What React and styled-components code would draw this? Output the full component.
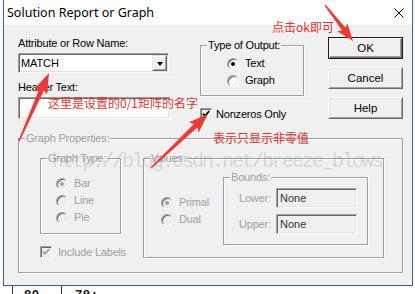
import React from 'react';
import styled, { createGlobalStyle } from 'styled-components';

const Global = createGlobalStyle`
  html, body { margin: 0; padding: 0; background: #fff; }
  body { font-family: "Liberation Sans", Arial, sans-serif; }
`;

const Screen = styled.div`
  position: relative;
  width: 415px;
  height: 294px;
  overflow: hidden;
  background: #fff;
  display: flex;
  flex-direction: column;
`;

const Window = styled.div`
  margin-left: 3px;
  width: 410px;
  height: 286px;
  box-sizing: border-box;
  border: 1px solid #2f63b0;
  border-top: none;
  background: #f0f0f0;
  display: flex;
  flex-direction: column;
  flex-shrink: 0;
`;

const TitleBar = styled.div`
  height: 25px;
  flex-shrink: 0;
  background: #fff;
  display: flex;
  align-items: center;
  justify-content: space-between;
  padding: 0 8px 0 3px;
`;

const TitleText = styled.span`
  font-family: "Noto Sans", "Liberation Sans", sans-serif;
  font-size: 12.5px;
  color: #000;
`;

const Body = styled.div`
  flex: 1;
  display: flex;
  flex-direction: column;
  padding-left: 14px;
`;

const TopSection = styled.div`
  height: 113px;
  display: flex;
  align-items: flex-start;
`;

const LeftCol = styled.div`
  width: 182px;
  padding-top: 12px;
  display: flex;
  flex-direction: column;
  align-items: flex-start;
`;

const MidCol = styled.div`
  width: 104px;
  margin-right: 24px;
  padding-top: 20px;
  display: flex;
  flex-direction: column;
`;

const ButtonCol = styled.div`
  width: 75px;
  padding-top: 12px;
  display: flex;
  flex-direction: column;
  gap: 8px;
`;

const Label = styled.span`
  font-size: 11px;
  line-height: 13px;
  height: 13px;
  letter-spacing: -0.2px;
  white-space: nowrap;
  color: ${p => (p.$disabled ? '#a0a0a0' : '#000')};
  margin-top: ${p => p.$mt || 0}px;
`;

const sunken = `
  box-sizing: border-box;
  border: 1px solid;
  border-color: #a0a0a0 #fff #fff #a0a0a0;
  box-shadow: inset 1px 1px 0 #696969, inset -1px -1px 0 #e3e3e3;
`;

const Combo = styled.div`
  ${sunken}
  margin-top: 3px;
  width: 151px;
  height: 20px;
  background: #fff;
  display: flex;
  align-items: center;
  justify-content: space-between;
  padding: 1px 1px 1px 2px;
`;

const ComboText = styled.span`
  font-size: 11px;
  letter-spacing: -0.1px;
  color: #000;
`;

const DropButton = styled.span`
  box-sizing: border-box;
  width: 15px;
  height: 16px;
  background: #f0f0f0;
  border: 1px solid;
  border-color: #e3e3e3 #696969 #696969 #e3e3e3;
  box-shadow: inset 1px 1px 0 #fff, inset -1px -1px 0 #a0a0a0;
  display: flex;
  align-items: center;
  justify-content: center;
`;

const DropArrow = styled.span`
  width: 0;
  height: 0;
  border-left: 3.5px solid transparent;
  border-right: 3.5px solid transparent;
  border-top: 4px solid #000;
  margin-top: 1px;
`;

const TextField = styled.div`
  ${sunken}
  margin-top: 3px;
  width: 152px;
  height: 22px;
  background: #fff;
`;

const GroupBox = styled.div`
  position: relative;
  box-sizing: border-box;
  border: 1px solid #a0a0a0;
  box-shadow: inset 1px 1px 0 #fff, 1px 1px 0 #fff;
  flex-shrink: 0;
`;

const Legend = styled.span`
  position: absolute;
  top: -7px;
  left: 6px;
  padding: 0 1px;
  background: #f0f0f0;
  font-size: 11px;
  line-height: 13px;
  letter-spacing: -0.2px;
  white-space: nowrap;
  color: ${p => (p.$disabled ? '#a0a0a0' : '#000')};
`;

const OutputGroup = styled(GroupBox)`
  width: 104px;
  height: 51px;
  padding: 11px 0 0 26px;
  display: flex;
  flex-direction: column;
  gap: 4px;
`;

const GraphPropsGroup = styled(GroupBox)`
  width: 385px;
  height: 135px;
  padding: 19px 0 0 21px;
  display: flex;
  align-items: flex-start;
`;

const LeftStack = styled.div`
  width: 81px;
  display: flex;
  flex-direction: column;
`;

const GraphTypeGroup = styled(GroupBox)`
  width: 81px;
  height: 76px;
  padding: 18px 0 0 15px;
  display: flex;
  flex-direction: column;
  gap: 4px;
`;

const ValuesGroup = styled(GroupBox)`
  margin-left: 22px;
  width: 241px;
  height: 100px;
  display: flex;
  align-items: flex-start;
`;

const ValuesOptions = styled.div`
  width: 79px;
  box-sizing: border-box;
  padding: 37px 0 0 17px;
  display: flex;
  flex-direction: column;
  gap: 4px;
`;

const BoundsGroup = styled(GroupBox)`
  margin-top: 18px;
  width: 145px;
  height: 68px;
  padding: 10px 0 0 15px;
  display: flex;
  flex-direction: column;
  gap: 6px;
`;

const BoundRow = styled.div`
  display: flex;
  align-items: center;
  height: 20px;
`;

const BoundLabel = styled(Label)`
  width: 37px;
`;

const BoundInput = styled.div`
  ${sunken}
  width: 81px;
  height: 20px;
  background: #f0f0f0;
  padding-left: 3px;
  font-size: 11px;
  line-height: 18px;
  color: #333;
`;

const Option = styled.div`
  display: flex;
  align-items: center;
  gap: 6px;
  height: 13px;
`;

const CheckRow = styled.div`
  display: flex;
  align-items: center;
  gap: ${p => p.$gap || 5}px;
  height: 12px;
  margin-top: ${p => p.$mt || 12}px;
`;

const Radio = styled.span`
  position: relative;
  box-sizing: border-box;
  width: 12px;
  height: 12px;
  border-radius: 50%;
  border: 1px solid;
  border-color: #a0a0a0 #fff #fff #a0a0a0;
  box-shadow: inset 1px 1px 0 #696969, inset -1px -1px 0 #e3e3e3;
  background: ${p => (p.$disabled ? '#f0f0f0' : '#fff')};
  flex-shrink: 0;
  &::after {
    content: '';
    display: ${p => (p.$checked ? 'block' : 'none')};
    position: absolute;
    left: 3px;
    top: 3px;
    width: 4px;
    height: 4px;
    border-radius: 50%;
    background: ${p => (p.$disabled ? '#a0a0a0' : '#000')};
  }
`;

const CheckBoxFrame = styled.span`
  box-sizing: border-box;
  width: 12px;
  height: 12px;
  border: 1px solid;
  border-color: #a0a0a0 #fff #fff #a0a0a0;
  box-shadow: inset 1px 1px 0 #696969, inset -1px -1px 0 #e3e3e3;
  background: ${p => (p.$disabled ? '#f0f0f0' : '#fff')};
  display: flex;
  align-items: center;
  justify-content: center;
  flex-shrink: 0;
`;

function Checkbox({ disabled }) {
  return (
    <CheckBoxFrame $disabled={disabled}>
      <svg width="8" height="8" viewBox="0 0 8 8">
        <polyline
          points="0.8,3.6 3,5.8 7.2,1.2"
          fill="none"
          stroke={disabled ? '#a0a0a0' : '#000'}
          strokeWidth="1.8"
        />
      </svg>
    </CheckBoxFrame>
  );
}

const Button = styled.button`
  box-sizing: border-box;
  width: 75px;
  height: 22px;
  padding: 0;
  margin: 0;
  background: #f0f0f0;
  font-family: "Liberation Sans", Arial, sans-serif;
  font-size: 11.5px;
  color: #000;
  border: 1px solid;
  border-color: ${p => (p.$default ? '#1a1a1a' : '#fff #696969 #696969 #fff')};
  box-shadow: ${p =>
    p.$default
      ? 'inset 1px 1px 0 #fff, inset -1px -1px 0 #696969, inset -2px -2px 0 #a0a0a0'
      : 'inset 1px 1px 0 #e3e3e3, inset -1px -1px 0 #a0a0a0'};
`;

const BottomStrip = styled.div`
  height: 8px;
  display: flex;
  padding-left: 12px;
  font-family: "Liberation Mono", monospace;
  font-size: 13px;
  font-weight: bold;
  line-height: 13px;
  color: #222;
`;

const StripCell = styled.div`
  border-left: 1px solid #333;
  width: ${p => p.$w}px;
  padding-left: ${p => p.$pl}px;
  padding-top: 3px;
  box-sizing: border-box;
  white-space: nowrap;
`;

const Watermark = styled.div`
  position: absolute;
  left: 52px;
  top: 152px;
  font-family: "Liberation Mono", monospace;
  font-size: 20px;
  line-height: 20px;
  letter-spacing: -2px;
  color: rgba(120, 120, 120, 0.24);
  white-space: nowrap;
  pointer-events: none;
`;

const Note = styled.div`
  position: absolute;
  left: ${p => p.$x}px;
  top: ${p => p.$y}px;
  font-family: "Noto Sans CJK SC", "Liberation Sans", sans-serif;
  font-size: 12px;
  line-height: 14px;
  color: #e5332f;
  white-space: nowrap;
  pointer-events: none;
`;

const ArrowLayer = styled.svg`
  position: absolute;
  left: 0;
  top: 0;
  pointer-events: none;
`;

function arrowPoints([tx, ty], [px, py], headLen, headW, tailW, neckW) {
  const dx = px - tx;
  const dy = py - ty;
  const L = Math.hypot(dx, dy);
  const ux = dx / L;
  const uy = dy / L;
  const nx = -uy;
  const ny = ux;
  const bx = px - ux * headLen;
  const by = py - uy * headLen;
  const bbx = bx - ux * 2.5;
  const bby = by - uy * 2.5;
  const pts = [
    [tx + (nx * tailW) / 2, ty + (ny * tailW) / 2],
    [bx + (nx * neckW) / 2, by + (ny * neckW) / 2],
    [bbx + (nx * headW) / 2, bby + (ny * headW) / 2],
    [px, py],
    [bbx - (nx * headW) / 2, bby - (ny * headW) / 2],
    [bx - (nx * neckW) / 2, by - (ny * neckW) / 2],
    [tx - (nx * tailW) / 2, ty - (ny * tailW) / 2],
  ];
  return pts.map(p => p.map(v => v.toFixed(1)).join(',')).join(' ');
}

const arrows = [
  { tail: [325, 5], tip: [353, 41], head: 15, w: 13, tw: 1.2, nw: 4.5 },
  { tail: [19, 141], tip: [49, 73], head: 18, w: 14, tw: 1.5, nw: 5 },
  { tail: [151, 168], tip: [208, 114], head: 17, w: 14, tw: 1.5, nw: 5 },
];

export default function App() {
  return (
    <>
      <Global />
      <Screen>
        <Window>
          <TitleBar>
            <TitleText>Solution Report or Graph</TitleText>
            <svg width="10" height="10" viewBox="0 0 10 10">
              <path d="M0.5 0.5 L9.5 9.5 M9.5 0.5 L0.5 9.5" stroke="#000" strokeWidth="1" />
            </svg>
          </TitleBar>
          <Body>
            <TopSection>
              <LeftCol>
                <Label>Attribute or Row Name:</Label>
                <Combo>
                  <ComboText>MATCH</ComboText>
                  <DropButton>
                    <DropArrow />
                  </DropButton>
                </Combo>
                <Label $mt={8}>Header Text:</Label>
                <TextField />
              </LeftCol>
              <MidCol>
                <OutputGroup>
                  <Legend>Type of Output:</Legend>
                  <Option>
                    <Radio $checked />
                    <Label>Text</Label>
                  </Option>
                  <Option>
                    <Radio />
                    <Label>Graph</Label>
                  </Option>
                </OutputGroup>
                <CheckRow $gap={4}>
                  <Checkbox />
                  <Label>Nonzeros Only</Label>
                </CheckRow>
              </MidCol>
              <ButtonCol>
                <Button $default>OK</Button>
                <Button>Cancel</Button>
                <Button>Help</Button>
              </ButtonCol>
            </TopSection>
            <GraphPropsGroup>
              <Legend $disabled>Graph Properties:</Legend>
              <LeftStack>
                <GraphTypeGroup>
                  <Legend $disabled>Graph Type:</Legend>
                  <Option>
                    <Radio $checked $disabled />
                    <Label $disabled>Bar</Label>
                  </Option>
                  <Option>
                    <Radio $disabled />
                    <Label $disabled>Line</Label>
                  </Option>
                  <Option>
                    <Radio $disabled />
                    <Label $disabled>Pie</Label>
                  </Option>
                </GraphTypeGroup>
                <CheckRow $gap={6}>
                  <Checkbox disabled />
                  <Label $disabled>Include Labels</Label>
                </CheckRow>
              </LeftStack>
              <ValuesGroup>
                <Legend $disabled>Values:</Legend>
                <ValuesOptions>
                  <Option>
                    <Radio $checked $disabled />
                    <Label $disabled>Primal</Label>
                  </Option>
                  <Option>
                    <Radio $disabled />
                    <Label $disabled>Dual</Label>
                  </Option>
                </ValuesOptions>
                <BoundsGroup>
                  <Legend $disabled>Bounds:</Legend>
                  <BoundRow>
                    <BoundLabel $disabled>Lower:</BoundLabel>
                    <BoundInput>None</BoundInput>
                  </BoundRow>
                  <BoundRow>
                    <BoundLabel $disabled>Upper:</BoundLabel>
                    <BoundInput>None</BoundInput>
                  </BoundRow>
                </BoundsGroup>
              </ValuesGroup>
            </GraphPropsGroup>
          </Body>
        </Window>
        <BottomStrip>
          <StripCell $w={49} $pl={3}>.80</StripCell>
          <StripCell $w={60} $pl={5}>.78:</StripCell>
        </BottomStrip>

        <Watermark>http://blog.csdn.net/breeze_blows</Watermark>
        <Note $x={272} $y={20}>点击ok即可</Note>
        <Note $x={48} $y={96}>这里是设置的0/1矩阵的名字</Note>
        <Note $x={213} $y={131}>表示只显示非零值</Note>
        <ArrowLayer width="415" height="294" viewBox="0 0 415 294">
          {arrows.map((a, i) => (
            <polygon key={i} points={arrowPoints(a.tail, a.tip, a.head, a.w, a.tw, a.nw)} fill="#ee3a35" />
          ))}
        </ArrowLayer>
      </Screen>
    </>
  );
}
